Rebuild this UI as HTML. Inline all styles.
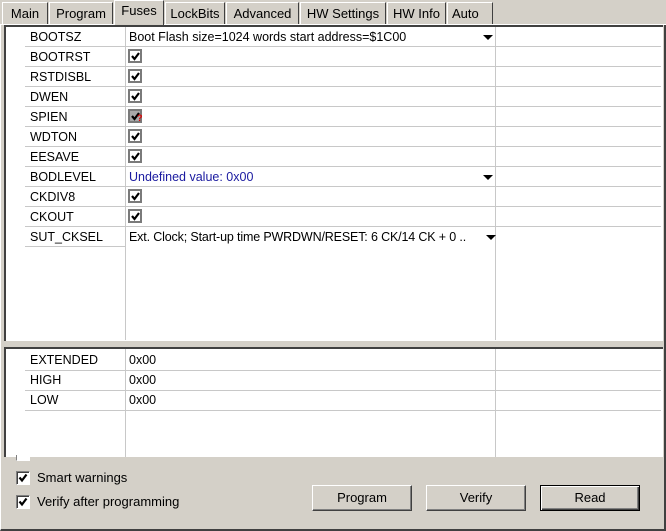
<!DOCTYPE html>
<html><head><style>
*{margin:0;padding:0;box-sizing:border-box}
body{width:666px;height:531px;background:#d4d0c8;position:relative;overflow:hidden;font-family:"Liberation Sans",Arial,sans-serif;font-size:12px;color:#000}
.a{position:absolute}
.tab{position:absolute;top:2px;height:22px;border:1px solid #fff;border-right:1px solid #404040;border-bottom:none;padding:3px 0 0 0;text-align:center;font-size:13px}
.grid{position:absolute;background:#fff}
.hl{position:absolute;height:1px;background:#c8c8c8}
.vl{position:absolute;width:1px;background:#c8c8c8}
.t{position:absolute;font-size:12.5px;line-height:14px;white-space:nowrap}
.cb{position:absolute;width:14px;height:14px;border:2px solid #7a7a7a;background:#fff}
.cb svg,.scb svg{position:absolute;left:1px;top:1px}
.arr{position:absolute;width:0;height:0;border-left:5px solid transparent;border-right:5px solid transparent;border-top:5px solid #000}
.btn{position:absolute;top:485px;height:26px;width:100px;border:1px solid;border-color:#fff #404040 #404040 #fff;box-shadow:inset -1px -1px 0 #808080;text-align:center;line-height:24px;font-size:13px}
.scb{position:absolute;width:14px;height:14px;border:1px solid;border-color:#808080 #fff #fff #808080;box-shadow:inset 1px 1px 0 #404040;background:#fff}
</style></head><body>
<div class="a" style="left:0;top:24px;width:666px;height:1px;background:#fff"></div>
<div class="tab" style="left:2px;width:46px">Main</div>
<div class="tab" style="left:49px;width:64px">Program</div>
<div class="tab" style="left:114px;top:0;height:25px;width:50px;background:#d4d0c8;padding-top:2px">Fuses</div>
<div class="tab" style="left:165px;width:60px">LockBits</div>
<div class="tab" style="left:226px;width:73px">Advanced</div>
<div class="tab" style="left:300px;width:86px">HW Settings</div>
<div class="tab" style="left:387px;width:59px">HW Info</div>
<div class="tab" style="left:447px;width:46px;text-align:left;padding-left:4px">Auto</div>

<div class="a" style="left:0;top:25px;width:666px;height:506px;border-left:1px solid #fff;border-right:2px solid #404040;border-bottom:2px solid #404040"></div>

<div class="grid" style="left:4px;top:25px;width:659px;height:316px;border-top:2px solid #404040;border-left:2px solid #404040"></div>
<div class="vl" style="left:125px;top:27px;height:313px"></div>
<div class="vl" style="left:495px;top:27px;height:313px"></div>
<div class="hl" style="left:25px;top:46px;width:636px"></div>
<div class="hl" style="left:25px;top:66px;width:636px"></div>
<div class="hl" style="left:25px;top:86px;width:636px"></div>
<div class="hl" style="left:25px;top:106px;width:636px"></div>
<div class="hl" style="left:25px;top:126px;width:636px"></div>
<div class="hl" style="left:25px;top:146px;width:636px"></div>
<div class="hl" style="left:25px;top:166px;width:636px"></div>
<div class="hl" style="left:25px;top:186px;width:636px"></div>
<div class="hl" style="left:25px;top:206px;width:636px"></div>
<div class="hl" style="left:25px;top:226px;width:636px"></div>
<div class="hl" style="left:25px;top:246px;width:100px"></div>

<div class="t" style="left:30px;top:30px">BOOTSZ</div>
<div class="t" style="left:30px;top:50px">BOOTRST</div>
<div class="t" style="left:30px;top:70px">RSTDISBL</div>
<div class="t" style="left:30px;top:90px">DWEN</div>
<div class="t" style="left:30px;top:110px">SPIEN</div>
<div class="t" style="left:30px;top:130px">WDTON</div>
<div class="t" style="left:30px;top:150px">EESAVE</div>
<div class="t" style="left:30px;top:170px">BODLEVEL</div>
<div class="t" style="left:30px;top:190px">CKDIV8</div>
<div class="t" style="left:30px;top:210px">CKOUT</div>
<div class="t" style="left:30px;top:230px">SUT_CKSEL</div>

<div class="t" style="left:129px;top:30px">Boot Flash size=1024 words start address=$1C00</div>
<div class="arr" style="left:483px;top:35px"></div>
<div class="t" style="left:129px;top:170px;color:#1a1aa0">Undefined value: 0x00</div>
<div class="arr" style="left:483px;top:175px"></div>
<div class="t" style="left:129px;top:230px;letter-spacing:-0.15px">Ext. Clock; Start-up time PWRDWN/RESET: 6 CK/14 CK + 0 ..</div>
<div class="arr" style="left:486px;top:235px"></div>

<div class="cb" style="left:128px;top:49px"><svg width="9" height="9"><path d="M1 4 L3.5 7 L8 1" stroke="#000" stroke-width="2.2" fill="none"/></svg></div>
<div class="cb" style="left:128px;top:69px"><svg width="9" height="9"><path d="M1 4 L3.5 7 L8 1" stroke="#000" stroke-width="2.2" fill="none"/></svg></div>
<div class="cb" style="left:128px;top:89px"><svg width="9" height="9"><path d="M1 4 L3.5 7 L8 1" stroke="#000" stroke-width="2.2" fill="none"/></svg></div>
<div class="cb" style="left:128px;top:109px;background:#a8a8a8"><svg width="9" height="9"><path d="M1 4 L3.5 7 L8 1" stroke="#000" stroke-width="2.2" fill="none"/></svg><span style="position:absolute;left:7px;top:3px;color:#e00000;font-size:9px;font-weight:bold;line-height:9px">?</span></div>
<div class="cb" style="left:128px;top:129px"><svg width="9" height="9"><path d="M1 4 L3.5 7 L8 1" stroke="#000" stroke-width="2.2" fill="none"/></svg></div>
<div class="cb" style="left:128px;top:149px"><svg width="9" height="9"><path d="M1 4 L3.5 7 L8 1" stroke="#000" stroke-width="2.2" fill="none"/></svg></div>
<div class="cb" style="left:128px;top:189px"><svg width="9" height="9"><path d="M1 4 L3.5 7 L8 1" stroke="#000" stroke-width="2.2" fill="none"/></svg></div>
<div class="cb" style="left:128px;top:209px"><svg width="9" height="9"><path d="M1 4 L3.5 7 L8 1" stroke="#000" stroke-width="2.2" fill="none"/></svg></div>

<div class="grid" style="left:4px;top:347px;width:659px;height:110px;border-top:2px solid #404040;border-left:2px solid #404040"></div>
<div class="vl" style="left:125px;top:349px;height:108px"></div>
<div class="vl" style="left:495px;top:349px;height:108px"></div>
<div class="hl" style="left:25px;top:370px;width:636px"></div>
<div class="hl" style="left:25px;top:390px;width:636px"></div>
<div class="hl" style="left:25px;top:410px;width:636px"></div>
<div class="t" style="left:30px;top:353px">EXTENDED</div>
<div class="t" style="left:30px;top:373px">HIGH</div>
<div class="t" style="left:30px;top:393px">LOW</div>
<div class="t" style="left:129px;top:353px">0x00</div>
<div class="t" style="left:129px;top:373px">0x00</div>
<div class="t" style="left:129px;top:393px">0x00</div>

<div class="scb" style="left:16px;top:455px;height:6px;box-shadow:none;border-top:none"></div>
<div class="scb" style="left:16px;top:471px"><svg width="10" height="10"><path d="M1.5 4.5 L4 7.5 L8.5 1.5" stroke="#000" stroke-width="2.2" fill="none"/></svg></div>
<div class="t" style="left:37px;top:471px;font-size:13px">Smart warnings</div>
<div class="scb" style="left:16px;top:495px"><svg width="10" height="10"><path d="M1.5 4.5 L4 7.5 L8.5 1.5" stroke="#000" stroke-width="2.2" fill="none"/></svg></div>
<div class="t" style="left:37px;top:495px;font-size:13px">Verify after programming</div>

<div class="btn" style="left:312px">Program</div>
<div class="btn" style="left:426px">Verify</div>
<div class="btn" style="left:540px;border:1px solid #000;box-shadow:inset 1px 1px 0 #fff,inset -1px -1px 0 #404040,inset -2px -2px 0 #808080">Read</div>
</body></html>
